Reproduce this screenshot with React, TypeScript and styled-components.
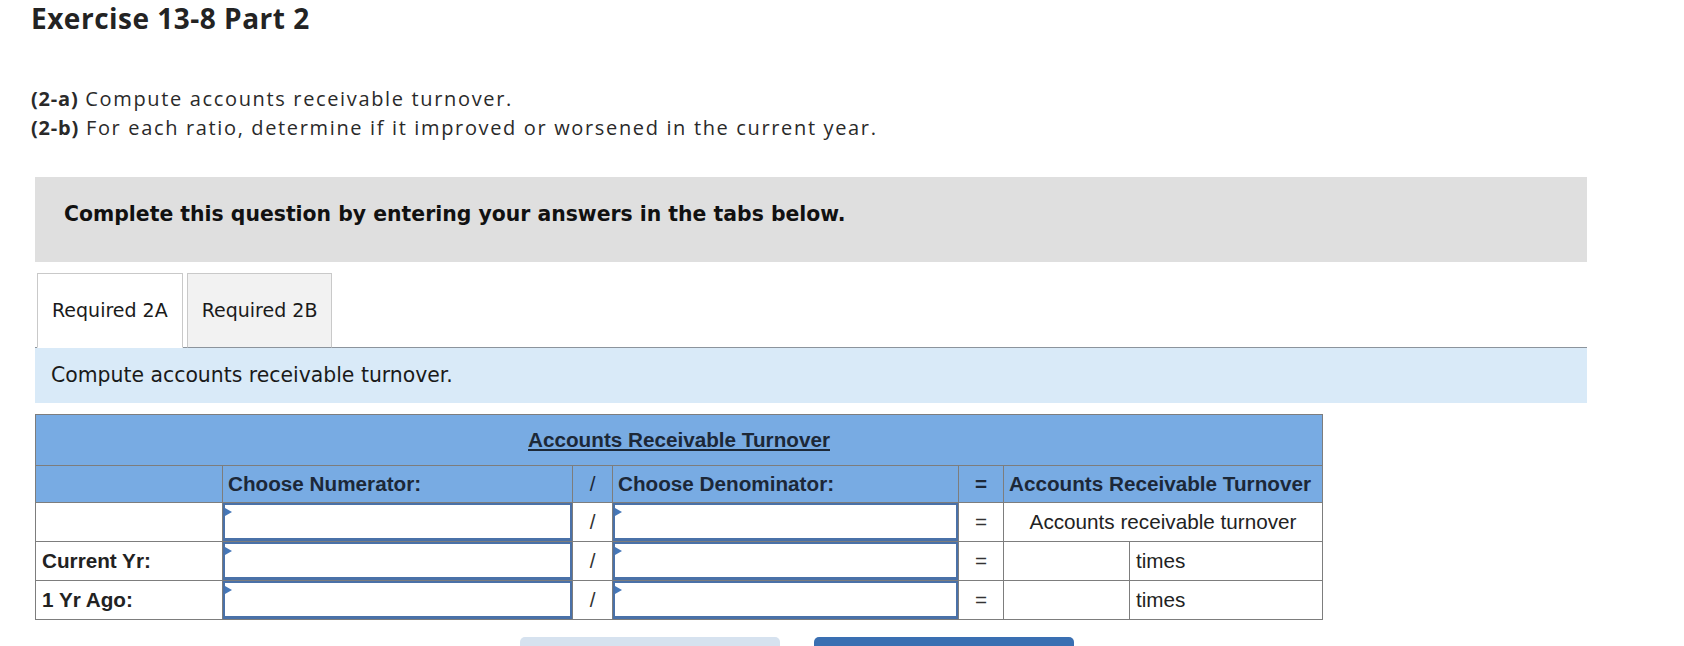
import styled, { createGlobalStyle } from 'styled-components'

const GlobalStyle = createGlobalStyle`
  html, body {
    margin: 0;
    padding: 0;
    background: #ffffff;
  }
`

type Row = {
  label: string
  result?: string
}

const rows: Row[] = [
  { label: '', result: 'Accounts receivable turnover' },
  { label: 'Current Yr:' },
  { label: '1 Yr Ago:' },
]

export default function App() {
  return (
    <Page>
      <GlobalStyle />
      <Title>Exercise 13-8 Part 2</Title>

      <Intro>
        <div>
          <strong>(2-a)</strong> Compute accounts receivable turnover.
        </div>
        <div>
          <strong>(2-b)</strong> For each ratio, determine if it improved or worsened in the current year.
        </div>
      </Intro>

      <Question>
        <Notice>Complete this question by entering your answers in the tabs below.</Notice>

        <Tabs>
          <Tab $active>Required 2A</Tab>
          <Tab>Required 2B</Tab>
        </Tabs>

        <Instruction>Compute accounts receivable turnover.</Instruction>

        <Table>
          <colgroup>
            <col style={{ width: 187 }} />
            <col style={{ width: 350 }} />
            <col style={{ width: 40 }} />
            <col style={{ width: 346 }} />
            <col style={{ width: 45 }} />
            <col style={{ width: 126 }} />
            <col style={{ width: 193 }} />
          </colgroup>
          <tbody>
            <tr>
              <TitleCell colSpan={7}>
                <u>Accounts Receivable Turnover</u>
              </TitleCell>
            </tr>
            <tr>
              <HeadCell />
              <HeadCell>Choose Numerator:</HeadCell>
              <HeadCell $center $light>/</HeadCell>
              <HeadCell>Choose Denominator:</HeadCell>
              <HeadCell $center>=</HeadCell>
              <HeadCell colSpan={2}>Accounts Receivable Turnover</HeadCell>
            </tr>
            {rows.map((row, i) => (
              <tr key={i}>
                <LabelCell>{row.label}</LabelCell>
                <InputCell>
                  <Field type="text" aria-label="numerator" />
                  <Flag />
                </InputCell>
                <OpCell>/</OpCell>
                <InputCell>
                  <Field type="text" aria-label="denominator" />
                  <Flag />
                </InputCell>
                <OpCell>=</OpCell>
                {row.result ? (
                  <ResultCell colSpan={2}>{row.result}</ResultCell>
                ) : (
                  <>
                    <ResultCell />
                    <UnitCell>times</UnitCell>
                  </>
                )}
              </tr>
            ))}
          </tbody>
        </Table>

        <Nav>
          <NavButton disabled aria-label="Required 2A" />
          <NavButton $primary aria-label="Required 2B" />
        </Nav>
      </Question>
    </Page>
  )
}

const Page = styled.div`
  padding: 0 0 40px 31px;
  color: #222222;
`

const Title = styled.h1`
  margin: 0;
  font-family: 'Open Sans', Lato, sans-serif;
  font-size: 28px;
  line-height: 36px;
  font-weight: 700;
  letter-spacing: 0.5px;
  color: #232323;
`

const Intro = styled.div`
  margin-top: 48px;
  font-family: 'Open Sans', Lato, sans-serif;
  font-size: 20px;
  line-height: 29px;
  letter-spacing: 1.65px;
  color: #2a2a2a;

  strong {
    font-weight: 700;
    letter-spacing: 0.8px;
  }
`

const Question = styled.div`
  margin: 35px 0 0 4px;
  width: 1552px;
`

const Notice = styled.div`
  height: 85px;
  box-sizing: border-box;
  padding: 25px 0 0 29px;
  background: #dfdfdf;
  font-family: 'DejaVu Sans', Verdana, sans-serif;
  font-size: 20.4px;
  line-height: 24px;
  font-weight: 700;
  color: #111111;
`

const Tabs = styled.div`
  display: flex;
  gap: 4px;
  margin-top: 11px;
  padding-left: 2px;
  border-bottom: 1px solid #8c949c;
`

const Tab = styled.div<{ $active?: boolean }>`
  height: 75px;
  box-sizing: border-box;
  padding: 25px 14px 0;
  margin-bottom: -1px;
  border: 1px solid #c9c9c9;
  border-bottom: ${({ $active }) => ($active ? '1px solid #ffffff' : '1px solid #8c949c')};
  background: ${({ $active }) => ($active ? '#ffffff' : '#f2f2f2')};
  font-family: 'DejaVu Sans', Verdana, sans-serif;
  font-size: 19px;
  line-height: 22px;
  color: #1a1a1a;
`

const Instruction = styled.div`
  height: 55px;
  box-sizing: border-box;
  padding: 16px 0 0 16px;
  background: #d9eaf8;
  font-family: 'DejaVu Sans', Verdana, sans-serif;
  font-size: 20.4px;
  line-height: 23px;
  color: #1a1a1a;
`

const Table = styled.table`
  margin-top: 11px;
  width: 1287px;
  table-layout: fixed;
  border-collapse: collapse;
  font-family: 'Liberation Sans', Arial, sans-serif;
  font-size: 20.7px;
  color: #222222;

  td {
    border: 1px solid #7d7d7d;
    padding: 0;
  }
`

const TitleCell = styled.td`
  height: 50px;
  background: #78abe3;
  text-align: center;
  font-weight: 700;
  color: #1c2838;
`

const HeadCell = styled.td<{ $center?: boolean; $light?: boolean }>`
  height: 36px;
  padding: 0 5px !important;
  background: #78abe3;
  text-align: ${({ $center }) => ($center ? 'center' : 'left')};
  font-weight: ${({ $light }) => ($light ? 400 : 700)};
  color: #1c2838;
  white-space: nowrap;
`

const LabelCell = styled.td`
  height: 38px;
  padding: 0 6px !important;
  font-weight: 700;
  color: #222222;
`

const InputCell = styled.td`
  position: relative;
  height: 38px;
`

const Field = styled.input`
  display: block;
  width: 100%;
  height: 38px;
  box-sizing: border-box;
  margin: 0;
  border: 2px solid #4a71a8;
  border-width: 2px 2px 3px 2px;
  outline: none;
  background: #ffffff;
  font: inherit;
`

const Flag = styled.span`
  position: absolute;
  left: 2px;
  top: 5px;
  width: 0;
  height: 0;
  border-top: 4px solid transparent;
  border-bottom: 4px solid transparent;
  border-left: 7px solid #4577b8;
  pointer-events: none;
`

const OpCell = styled.td`
  text-align: center;
  color: #333333;
`

const ResultCell = styled.td`
  text-align: center;
`

const UnitCell = styled.td`
  padding: 0 6px !important;
  text-align: left;
`

const Nav = styled.div`
  display: flex;
  gap: 34px;
  margin: 17px 0 0 485px;
`

const NavButton = styled.button<{ $primary?: boolean }>`
  width: 260px;
  height: 44px;
  border: none;
  border-radius: 5px;
  background: ${({ $primary }) => ($primary ? '#3a6fb2' : '#d6e2ef')};
`
